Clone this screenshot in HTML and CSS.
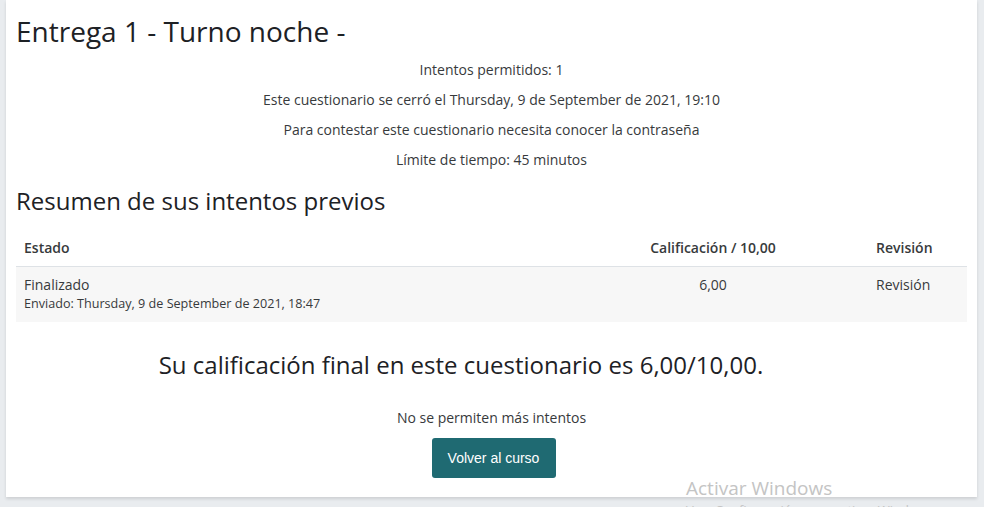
FILE: index.html
```html
<!DOCTYPE html>
<html lang="es">
<head>
<meta charset="utf-8">
<title>Entrega 1 - Turno noche -</title>
<link rel="stylesheet" href="styles.css">
</head>
<body>
<div class="page">
  <main class="card">
    <h2 class="title">Entrega 1 - Turno noche -</h2>
    <div class="info">
      <p>Intentos permitidos: 1</p>
      <p>Este cuestionario se cerró el Thursday, 9 de September de 2021, 19:10</p>
      <p>Para contestar este cuestionario necesita conocer la contraseña</p>
      <p>Límite de tiempo: 45 minutos</p>
    </div>
    <h3 class="subtitle">Resumen de sus intentos previos</h3>
    <table class="attempts">
      <thead>
        <tr>
          <th class="c-state">Estado</th>
          <th class="c-grade">Calificación / 10,00</th>
          <th class="c-review">Revisión</th>
        </tr>
      </thead>
      <tbody>
        <tr>
          <td class="c-state">Finalizado<span class="sub">Enviado: Thursday, 9 de September de 2021, 18:47</span></td>
          <td class="c-grade">6,00</td>
          <td class="c-review">Revisión</td>
        </tr>
      </tbody>
    </table>
    <div class="final">Su calificación final en este cuestionario es 6,00/10,00.</div>
    <p class="nomore">No se permiten más intentos</p>
    <div class="actions"><button class="btn" type="button">Volver al curso</button></div>
  </main>
</div>
<div class="watermark">
  <div class="wm-title">Activar Windows</div>
  <div class="wm-sub">Ve a Configuración para activar Windows.</div>
</div>
</body>
</html>
```
FILE: styles.css
```css
html, body {
  margin: 0;
  padding: 0;
  height: 100%;
  overflow: hidden;
}
body {
  background: #e9ecef;
  font-family: "Open Sans", "Noto Sans", sans-serif;
  color: #373a3c;
  font-size: 14px;
}
.page {
  padding: 0 7px 0 6px;
}
.card {
  background: #fff;
  padding: 14px 10px 19px 10px;
  box-shadow: 0 2px 3px rgba(0,0,0,0.12);
}
.title {
  margin: 0;
  font-weight: 400;
  font-size: 28px;
  line-height: 34px;
  color: #1d2125;
}
.info {
  margin-top: 7px;
  text-align: center;
}
.info p {
  margin: 0;
  line-height: 30px;
}
.subtitle {
  margin: 11px 0 14px 0;
  font-weight: 400;
  font-size: 24px;
  line-height: 30px;
  color: #1d2125;
}
.attempts {
  width: 100%;
  border-collapse: collapse;
}
.attempts th, .attempts td {
  padding: 8px 8px;
  line-height: 20px;
  vertical-align: top;
}
.attempts th {
  font-weight: 600;
  text-align: left;
  border-bottom: 1px solid #dee2e6;
}
.attempts td {
  background: #f7f7f7;
  padding-bottom: 9px;
}
.c-state { width: 526px; text-align: left; }
.attempts .c-grade { width: 294px; text-align: center; }
.attempts .c-review { text-align: left; }
.sub {
  display: block;
  font-size: 12.6px;
  line-height: 18px;
}
.final {
  margin-top: 28px;
  padding-right: 61px;
  text-align: center;
  font-size: 24px;
  line-height: 30px;
  color: #1d2125;
}
.nomore {
  margin: 28px 0 0 0;
  text-align: center;
  line-height: 20px;
}
.actions {
  display: flex;
  justify-content: center;
  margin-top: 10px;
  padding-left: 4px;
}
.btn {
  width: 124px;
  height: 40px;
  border: 0;
  border-radius: 3px;
  background: #1f6a72;
  color: #fff;
  font-family: "Liberation Sans", Arial, sans-serif;
  font-size: 14px;
  padding: 0;
}
.watermark {
  position: absolute;
  left: 686px;
  top: 475px;
  color: #c4c4c4;
  font-family: "Open Sans", "Noto Sans", sans-serif;
  white-space: nowrap;
}
.wm-title {
  font-size: 19px;
  line-height: 26px;
}
.wm-sub {
  font-size: 13px;
  line-height: 18px;
}
```
